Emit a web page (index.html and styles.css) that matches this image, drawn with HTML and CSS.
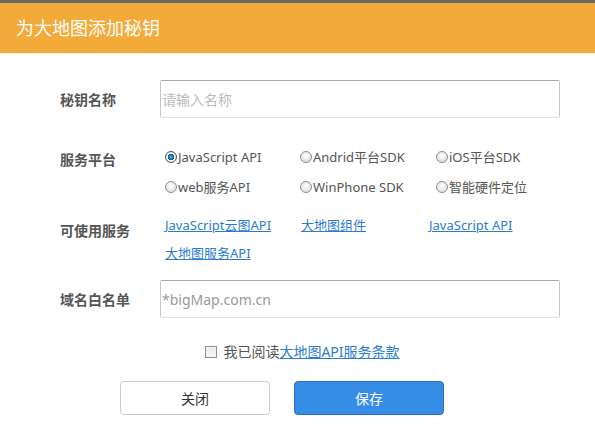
FILE: index.html
```html
<!DOCTYPE html>
<html lang="zh-CN">
<head>
<meta charset="utf-8">
<title>为大地图添加秘钥</title>
<link rel="stylesheet" href="styles.css">
</head>
<body>
<div class="topbar"></div>
<header class="header">为大地图添加秘钥</header>
<main class="form">
  <div class="row row-name">
    <label class="label">秘钥名称</label>
    <input class="text-input" type="text" placeholder="请输入名称">
  </div>
  <div class="row row-platform">
    <span class="label label-platform">服务平台</span>
    <div class="radio-grid">
      <label class="radio"><input type="radio" name="p" checked>JavaScript API</label>
      <label class="radio"><input type="radio" name="p">Andrid平台SDK</label>
      <label class="radio"><input type="radio" name="p">iOS平台SDK</label>
      <label class="radio"><input type="radio" name="p">web服务API</label>
      <label class="radio"><input type="radio" name="p">WinPhone SDK</label>
      <label class="radio"><input type="radio" name="p">智能硬件定位</label>
    </div>
  </div>
  <div class="row row-services">
    <span class="label label-services">可使用服务</span>
    <div class="link-grid">
      <a href="#">JavaScript云图API</a>
      <a href="#">大地图组件</a>
      <a href="#">JavaScript API</a>
      <a href="#">大地图服务API</a>
    </div>
  </div>
  <div class="row row-domain">
    <label class="label">域名白名单</label>
    <input class="text-input domain-input" type="text" placeholder="*bigMap.com.cn">
  </div>
  <div class="agree">
    <input type="checkbox" class="check"><span>我已阅读</span><a href="#">大地图API服务条款</a>
  </div>
  <div class="actions">
    <button class="btn btn-close">关闭</button>
    <button class="btn btn-save">保存</button>
  </div>
</main>
</body>
</html>
```
FILE: styles.css
```css
* { box-sizing: border-box; }
html, body {
  margin: 0;
  background: #fff;
  font-family: "Noto Sans", "Noto Sans CJK SC", sans-serif;
  color: #555;
}
.topbar {
  height: 3px;
  background: #6b6966;
}
.header {
  height: 51px;
  background: #f4aa38;
  border-bottom: 1px solid #eee;
  color: #fff;
  font-size: 18px;
  line-height: 50px;
  padding-left: 16px;
}
.form {
  padding: 26px 0 0 60px;
}
.row {
  display: grid;
  grid-template-columns: 100px 400px;
  align-items: center;
}
.label {
  font-size: 14px;
  font-weight: bold;
  color: #555;
}
.text-input {
  height: 38px;
  width: 400px;
  border: 1px solid #c8c8cc;
  border-top-color: #aaa;
  border-bottom-color: #e0e0e6;
  border-radius: 2px;
  padding: 0 0 0 1px;
  font-family: inherit;
  font-size: 14px;
  color: #555;
  outline: none;
}
.text-input::placeholder { color: #bbb; }
.domain-input::placeholder { color: #999; }
.row-platform {
  align-items: start;
  margin-top: 29px;
}
.label-platform { padding-top: 3px; line-height: 20px; }
.radio-grid {
  display: grid;
  grid-template-columns: 135px 136px 130px;
  row-gap: 10px;
  padding-left: 5px;
}
.radio {
  display: flex;
  align-items: center;
  font-size: 13px;
  line-height: 20px;
  color: #555;
  white-space: nowrap;
}
.radio input {
  appearance: none;
  -webkit-appearance: none;
  width: 12px;
  height: 12px;
  margin: 0 1px 0 0;
  border-radius: 50%;
  border: 1px solid #8e8f8f;
  background: radial-gradient(circle at 50% 40%, #fff 0%, #e9e9e9 55%, #cfcfcf 100%);
  flex: none;
}
.radio input:checked {
  background: radial-gradient(circle, #4cb4e8 0%, #1a6fa8 35%, #0d3c5e 42%, #f4f4f4 50%, #dedede 100%);
  border-color: #3a5670;
}
.row-services {
  align-items: start;
  margin-top: 18px;
}
.label-services { padding-top: 6px; line-height: 20px; }
.link-grid {
  display: grid;
  grid-template-columns: 136px 128px 130px;
  row-gap: 8px;
  padding-left: 5px;
}
.link-grid a {
  color: #2d7bd0;
  font-size: 13px;
  line-height: 20px;
  text-decoration: underline;
  white-space: nowrap;
}
.row-domain { margin-top: 17px; }
.agree {
  display: flex;
  align-items: center;
  justify-content: center;
  margin: 24px 0 0 -50px;
  font-size: 14px;
  line-height: 20px;
  color: #555;
}
.agree a {
  color: #2d7bd0;
  text-decoration: underline;
  white-space: nowrap;
}
.check {
  appearance: none;
  -webkit-appearance: none;
  width: 12px;
  height: 12px;
  margin: 0 6px 0 0;
  border: 1px solid #8e8f8f;
  background: linear-gradient(#e6e6e6, #fafafa);
  box-shadow: inset 0 0 0 1px #f2f2f2;
}
.actions {
  display: flex;
  gap: 24px;
  margin-top: 19px;
  padding-left: 60px;
}
.btn {
  width: 150px;
  height: 34px;
  border-radius: 4px;
  font-family: inherit;
  font-size: 14px;
  cursor: pointer;
}
.btn-close {
  background: #fff;
  border: 1px solid #ccc;
  color: #333;
}
.btn-save {
  background: #368de6;
  border: 1px solid #2a6eb8;
  color: #fff;
}
```
